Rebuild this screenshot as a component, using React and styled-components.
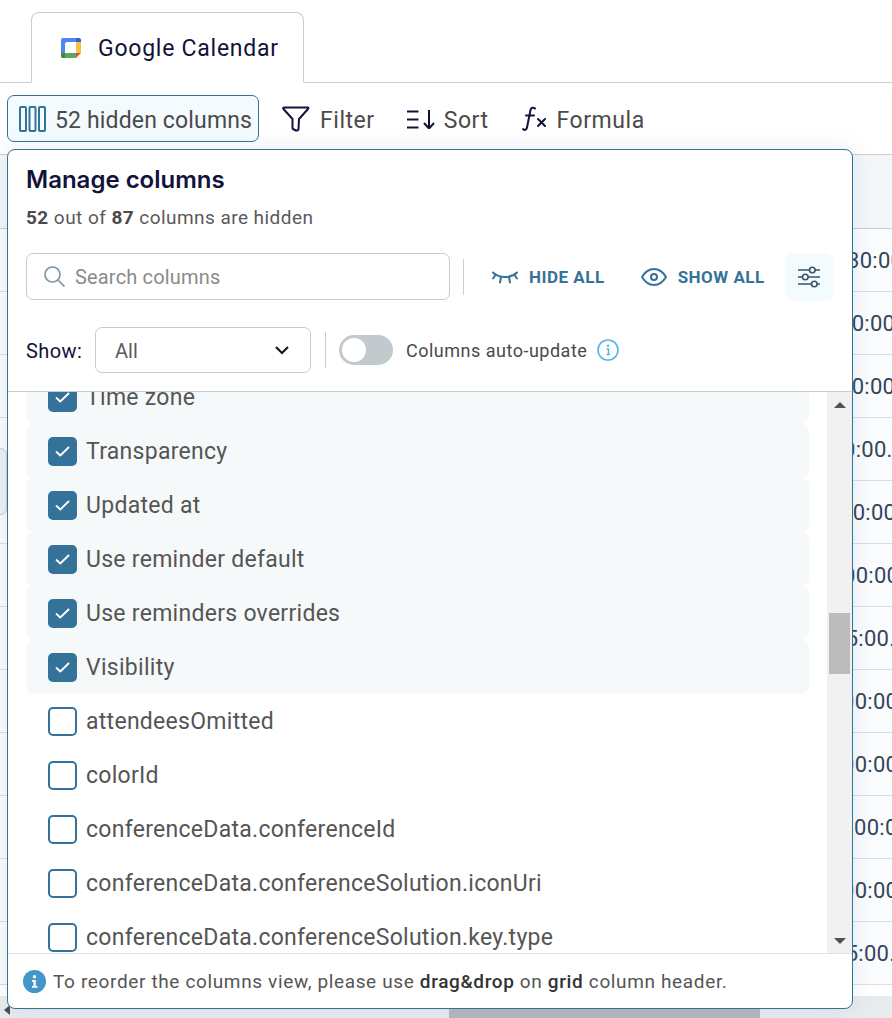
import styled, { createGlobalStyle } from 'styled-components'

const GlobalStyle = createGlobalStyle`
  html, body {
    margin: 0;
    padding: 0;
    background: #fff;
    font-family: Roboto, "Liberation Sans", sans-serif;
  }
  svg {
    flex-shrink: 0;
  }
`

const Page = styled.div`
  position: relative;
  width: 892px;
  height: 1018px;
  overflow: hidden;
  display: flex;
  flex-direction: column;
  background: #fff;
`

const TabBar = styled.div`
  height: 82px;
  flex-shrink: 0;
  box-sizing: content-box;
  border-bottom: 1px solid #c8cfd4;
  display: flex;
  align-items: flex-end;
  padding-left: 31px;
`

const Tab = styled.div`
  width: 273px;
  height: 71px;
  box-sizing: border-box;
  margin-bottom: -1px;
  background: #fff;
  border: 1px solid #c8cfd4;
  border-bottom: 1px solid #fff;
  border-radius: 8px 8px 0 0;
  display: flex;
  align-items: center;
  padding-left: 29px;
  gap: 17px;
  font-size: 23px;
  letter-spacing: 0.75px;
  color: #12123a;
`

const TabLabel = styled.span`
  padding-top: 2px;
`

const Toolbar = styled.div`
  height: 72px;
  flex-shrink: 0;
  box-sizing: border-box;
  display: flex;
  align-items: flex-start;
  padding: 12px 0 0 7px;
  border-bottom: 1px solid #c8cfd4;
`

const ColumnsButton = styled.div`
  width: 252px;
  height: 47px;
  box-sizing: border-box;
  background: #f4fbfe;
  border: 1px solid #35729a;
  border-radius: 7px;
  display: flex;
  align-items: center;
  padding: 1px 0 0 11px;
  gap: 9px;
  font-size: 23px;
  letter-spacing: 0.15px;
  color: #4a4a4a;
  white-space: nowrap;
`

const ToolButton = styled.div`
  height: 47px;
  padding-top: 1px;
  box-sizing: border-box;
  display: flex;
  align-items: center;
  gap: ${({ $gap }) => $gap}px;
  margin-left: ${({ $ml }) => $ml}px;
  font-size: 23px;
  letter-spacing: 0.55px;
  color: #4a4a4a;
`

const ToolLabel = styled.span`
  padding-top: 2px;
`

const Grid = styled.div`
  flex: 1;
  display: flex;
  flex-direction: column;
`

const GridHead = styled.div`
  height: 73px;
  flex-shrink: 0;
  border-bottom: 1px solid #c8cfd4;
  background: #f4f7f9;
`

const GridRow = styled.div`
  height: 61px;
  padding-top: 1px;
  flex-shrink: 0;
  border-bottom: 1px solid #d8dfe8;
  display: flex;
  align-items: center;
  padding-left: ${({ $x }) => $x}px;
  background: #fbfcfd;
  font-size: 22px;
  letter-spacing: 0.3px;
  color: #33455c;
  white-space: nowrap;
`

const GridFoot = styled.div`
  flex: 1;
  margin-top: 11px;
  background: #e9ecee;
  display: flex;
  justify-content: flex-start;
  padding-left: 449px;
`

const HScrollThumb = styled.div`
  width: 311px;
  background: #b4b8bb;
`

const LeftHandle = styled.div`
  position: absolute;
  left: -8px;
  top: 448px;
  width: 15px;
  height: 67px;
  box-sizing: border-box;
  background: #eef1f3;
  border: 1px solid #c8cfd4;
  border-radius: 6px;
`

const LeftArrow = styled.div`
  position: absolute;
  left: 4px;
  top: 1005px;
  width: 0;
  height: 0;
  border-top: 5px solid transparent;
  border-bottom: 5px solid transparent;
  border-right: 6px solid #4a4a4a;
`

const Panel = styled.div`
  position: absolute;
  left: 7px;
  top: 149px;
  width: 846px;
  height: 860px;
  box-sizing: border-box;
  background: #fff;
  border: 1px solid #35729a;
  border-radius: 8px;
  box-shadow: 0 0 24px rgba(90, 120, 150, 0.14);
  display: flex;
  flex-direction: column;
  overflow: hidden;
`

const PanelHead = styled.div`
  height: 242px;
  flex-shrink: 0;
  box-sizing: border-box;
  border-bottom: 1px solid #c8cfd4;
  padding: 15px 18px 0;
  display: flex;
  flex-direction: column;
`

const Title = styled.div`
  font-family: Inter, sans-serif;
  font-size: 24px;
  line-height: 30px;
  font-weight: 600;
  color: #12123a;
`

const Subtitle = styled.div`
  margin-top: 10px;
  font-size: 19px;
  line-height: 26px;
  letter-spacing: 0.45px;
  color: #5a5a5a;
  b {
    font-weight: 700;
    color: #4a4a4a;
  }
`

const SearchRow = styled.div`
  margin-top: 22px;
  height: 47px;
  display: flex;
  align-items: center;
`

const SearchBox = styled.div`
  width: 424px;
  height: 47px;
  flex-shrink: 0;
  box-sizing: border-box;
  border: 1px solid #c8cacc;
  border-radius: 7px;
  display: flex;
  align-items: center;
  padding-left: 17px;
  gap: 10px;
  font-size: 20px;
  letter-spacing: 0.17px;
  color: #8a8a8a;
`

const Divider = styled.div`
  width: 1px;
  height: 36px;
  flex-shrink: 0;
  background: #c8cfd4;
  margin: 0 ${({ $mr }) => $mr}px 0 ${({ $ml }) => $ml}px;
`

const ActionLink = styled.div`
  display: flex;
  align-items: center;
  gap: 11px;
  margin-right: ${({ $mr }) => $mr}px;
  font-size: 17px;
  font-weight: 700;
  letter-spacing: 0.5px;
  color: #35729a;
  white-space: nowrap;
`

const SettingsButton = styled.div`
  width: 48px;
  height: 48px;
  flex-shrink: 0;
  border-radius: 7px;
  background: #f4fbfd;
  display: flex;
  align-items: center;
  justify-content: center;
`

const ShowRow = styled.div`
  margin-top: 27px;
  height: 46px;
  display: flex;
  align-items: center;
`

const ShowLabel = styled.div`
  padding-top: 1px;
  font-size: 20px;
  letter-spacing: 0.4px;
  color: #12123a;
  width: 69px;
`

const Select = styled.div`
  width: 216px;
  height: 46px;
  box-sizing: border-box;
  border: 1px solid #c8cacc;
  border-radius: 7px;
  display: flex;
  align-items: center;
  justify-content: space-between;
  padding: 0 21px 0 19px;
  font-size: 20px;
  color: #5a5a5a;
`

const SelectValue = styled.span`
  padding-top: 2px;
`

const Toggle = styled.div`
  width: 54px;
  height: 30px;
  box-sizing: border-box;
  border-radius: 15px;
  background: #c3cacd;
  padding: 3px;
  margin-right: 13px;
`

const ToggleKnob = styled.div`
  width: 24px;
  height: 24px;
  border-radius: 50%;
  background: #fff;
`

const ToggleText = styled.div`
  padding-top: 1px;
  font-size: 18px;
  letter-spacing: 0.5px;
  color: #4a4a4a;
  margin-right: 10px;
`

const ListArea = styled.div`
  flex: 1;
  min-height: 0;
  display: flex;
`

const List = styled.div`
  flex: 1;
  overflow: hidden;
  padding: 0 18px;
`

const ListInner = styled.div`
  margin-top: -22px;
`

const Row = styled.div`
  height: 54px;
  box-sizing: border-box;
  display: flex;
  align-items: center;
  padding-left: 22px;
  gap: 9px;
  border-radius: 8px;
  background: ${({ $checked }) => ($checked ? '#f6f9fa' : 'transparent')};
  font-size: 23px;
  letter-spacing: 0.28px;
  color: #555;
  white-space: nowrap;
`

const Box = styled.div`
  width: 29px;
  height: 29px;
  flex-shrink: 0;
  box-sizing: border-box;
  border-radius: 5px;
  border: 2px solid #35729a;
  background: ${({ $checked }) => ($checked ? '#35729a' : '#fff')};
  display: flex;
  align-items: center;
  justify-content: center;
`

const ScrollTrack = styled.div`
  width: 25px;
  flex-shrink: 0;
  background: #f1f1f1;
  display: flex;
  flex-direction: column;
  align-items: center;
`

const ArrowUp = styled.div`
  margin-top: 10px;
  border-left: 6px solid transparent;
  border-right: 6px solid transparent;
  border-bottom: 6px solid #505050;
`

const ArrowDown = styled.div`
  margin-top: auto;
  margin-bottom: 9px;
  border-left: 6px solid transparent;
  border-right: 6px solid transparent;
  border-top: 6px solid #505050;
`

const ScrollThumb = styled.div`
  margin-top: 205px;
  width: 21px;
  height: 61px;
  background: #bcbcbc;
`

const Footer = styled.div`
  height: 55px;
  flex-shrink: 0;
  box-sizing: border-box;
  border-top: 1px solid #d8e2ea;
  display: flex;
  align-items: center;
  padding: 0 0 0 15px;
  gap: 7px;
  font-size: 19px;
  letter-spacing: 0.64px;
  color: #555;
  b {
    font-weight: 500;
    color: #333;
  }
`

const rows = [
  ['Time zone', true],
  ['Transparency', true],
  ['Updated at', true],
  ['Use reminder default', true],
  ['Use reminders overrides', true],
  ['Visibility', true],
  ['attendeesOmitted', false],
  ['colorId', false],
  ['conferenceData.conferenceId', false],
  ['conferenceData.conferenceSolution.iconUri', false],
  ['conferenceData.conferenceSolution.key.type', false],
]

// x is where the cell text starts, the panel covers everything left of 853
const gridRows = [
  { x: 847, text: '30:00' },
  { x: 839, text: '00:00' },
  { x: 839, text: '00:00' },
  { x: 843, text: '0:00.000' },
  { x: 840, text: '00:00' },
  { x: 843, text: '00:00' },
  { x: 833, text: '15:00.0' },
  { x: 842, text: '00:00' },
  { x: 842, text: '00:00' },
  { x: 854, text: '00:00' },
  { x: 842, text: '00:00' },
  { x: 833, text: '15:00.0' },
]

function CalendarLogo() {
  return (
    <svg width="20" height="20" viewBox="0 0 20 20">
      <path d="M2 0h14v4H6a2 2 0 0 0-2 2v9H0V2a2 2 0 0 1 2-2z" fill="#4f86ec" />
      <path d="M15 0h3a2 2 0 0 1 2 2v2h-5z" fill="#2f62c6" />
      <path d="M15 4h5v11h-5z" fill="#f6c244" />
      <path d="M4 15h11v5H2a2 2 0 0 1-2-2v-3z" fill="#5aa860" />
      <path d="M0 15h4v5H2a2 2 0 0 1-2-2z" fill="#3c8a44" />
      <path d="M15 15h5l-5 5z" fill="#e0503f" />
    </svg>
  )
}

function ColumnsIcon() {
  return (
    <svg width="27" height="26" viewBox="0 0 27 26" fill="none" stroke="#35729a" strokeWidth="2">
      <rect x="1" y="1" width="6" height="24" rx="1" />
      <rect x="10.5" y="1" width="6" height="24" rx="1" />
      <rect x="20" y="1" width="6" height="24" rx="1" />
    </svg>
  )
}

function FunnelIcon() {
  return (
    <svg width="28" height="27" viewBox="0 0 28 27" fill="none" stroke="#12123a" strokeWidth="2" strokeLinejoin="round">
      <path d="M2.500 1.500h23q1.500 0 .5 1.500L17 13l-.5 10q-.5 2-2.500 1.500L11 23q-.5 0-.5-1V13L1.500 3q-1-1.500 1-1.500z" />
    </svg>
  )
}

function SortIcon() {
  return (
    <svg width="28" height="19" viewBox="0 0 28 19" fill="none" stroke="#12123a" strokeWidth="2">
      <path d="M0 1.500h11.500M0 9.500h11.500M0 17.500h11.500" />
      <path d="M22 0v18M17 13l5 5.500 5-5.500" />
    </svg>
  )
}

function FormulaIcon() {
  return (
    <svg width="26" height="26" viewBox="0 0 26 26" fill="none" stroke="#12123a" strokeWidth="2" strokeLinecap="round">
      <path d="M14 2.500c-1.500-1.500-4-1-4.500 1.500L6 21.500c-.5 2.500-3 3-4 1.500" />
      <path d="M5 9.500h8" />
      <path d="M17 13l7 7M24 13l-7 7" />
    </svg>
  )
}

function SearchIcon() {
  return (
    <svg width="21" height="21" viewBox="0 0 21 21" fill="none" stroke="#7e97a6" strokeWidth="1.700">
      <circle cx="8.500" cy="8.500" r="7.500" />
      <path d="M14 14l6.500 6.500" />
    </svg>
  )
}

function ClosedEyeIcon() {
  return (
    <svg width="26" height="14" viewBox="0 0 26 14" fill="none" stroke="#35729a" strokeWidth="2" strokeLinecap="round">
      <path d="M1 2.500c3 3 7 4.500 12 4.500s9-1.500 12-4.500" />
      <path d="M3.500 5L1 8.500M9 7l-1 5.500M17 7l1 5.500M22.500 5L25 8.500" />
    </svg>
  )
}

function EyeIcon() {
  return (
    <svg width="26" height="18" viewBox="0 0 26 18" fill="none" stroke="#35729a" strokeWidth="2">
      <path d="M1 9c3-5 7.500-8 12-8s9 3 12 8c-3 5-7.500 8-12 8S4 14 1 9z" />
      <circle cx="13" cy="9" r="3" />
    </svg>
  )
}

function SlidersIcon() {
  return (
    <svg width="22" height="22" viewBox="0 0 22 22" fill="none" stroke="#35566e" strokeWidth="1.600">
      <path d="M0 4h11.500M17 4h5M0 11h4.500M10 11h12M0 18h13.500M19 18h3" />
      <circle cx="14.300" cy="4" r="2.800" />
      <circle cx="7.300" cy="11" r="2.800" />
      <circle cx="16.300" cy="18" r="2.800" />
    </svg>
  )
}

function ChevronIcon() {
  return (
    <svg width="14" height="9" viewBox="0 0 14 9" fill="none" stroke="#111" strokeWidth="2">
      <path d="M1 1l6 6 6-6" />
    </svg>
  )
}

function InfoOutlineIcon() {
  return (
    <svg width="22" height="22" viewBox="0 0 22 22" fill="none">
      <circle cx="11" cy="11" r="10" stroke="#5bb4ea" strokeWidth="1.600" />
      <circle cx="11" cy="6.800" r="1.200" fill="#5bb4ea" />
      <path d="M9.500 10h2v5.500M9.500 15.500h3.500" stroke="#5bb4ea" strokeWidth="1.500" />
    </svg>
  )
}

function InfoFilledIcon() {
  return (
    <svg width="23" height="23" viewBox="0 0 23 23">
      <circle cx="11.500" cy="11.500" r="11.500" fill="#4496c9" />
      <circle cx="11.500" cy="6.800" r="1.700" fill="#fff" />
      <path d="M9 10h3.800v6H14.500v1.800h-5.500V16h1.500v-4.200H9z" fill="#fff" />
    </svg>
  )
}

function CheckIcon() {
  return (
    <svg width="15" height="11" viewBox="0 0 15 11" fill="none" stroke="#fff" strokeWidth="1.800" strokeLinecap="round" strokeLinejoin="round">
      <path d="M1.500 6l3.800 3.500L13.500 1.500" />
    </svg>
  )
}

function App() {
  return (
    <>
      <GlobalStyle />
      <Page>
        <TabBar>
          <Tab>
            <CalendarLogo />
            <TabLabel>Google Calendar</TabLabel>
          </Tab>
        </TabBar>
        <Toolbar>
          <ColumnsButton>
            <ColumnsIcon />
            <ToolLabel>52 hidden columns</ToolLabel>
          </ColumnsButton>
          <ToolButton $ml={23} $gap={10}>
            <FunnelIcon />
            <ToolLabel>Filter</ToolLabel>
          </ToolButton>
          <ToolButton $ml={32} $gap={9}>
            <SortIcon />
            <ToolLabel>Sort</ToolLabel>
          </ToolButton>
          <ToolButton $ml={32} $gap={10}>
            <FormulaIcon />
            <ToolLabel>Formula</ToolLabel>
          </ToolButton>
        </Toolbar>
        <Grid>
          <GridHead />
          {gridRows.map((row, i) => (
            <GridRow key={i} $x={row.x}>
              {row.text}
            </GridRow>
          ))}
          <GridFoot>
            <HScrollThumb />
          </GridFoot>
        </Grid>
        <LeftHandle />
        <LeftArrow />
        <Panel>
          <PanelHead>
            <Title>Manage columns</Title>
            <Subtitle>
              <b>52</b> out of <b>87</b> columns are hidden
            </Subtitle>
            <SearchRow>
              <SearchBox>
                <SearchIcon />
                Search columns
              </SearchBox>
              <Divider $ml={13} $mr={28} />
              <ActionLink $mr={36}>
                <ClosedEyeIcon />
                HIDE ALL
              </ActionLink>
              <ActionLink $mr={20}>
                <EyeIcon />
                SHOW ALL
              </ActionLink>
              <SettingsButton>
                <SlidersIcon />
              </SettingsButton>
            </SearchRow>
            <ShowRow>
              <ShowLabel>Show:</ShowLabel>
              <Select>
                <SelectValue>All</SelectValue>
                <ChevronIcon />
              </Select>
              <Divider $ml={14} $mr={13} />
              <Toggle>
                <ToggleKnob />
              </Toggle>
              <ToggleText>Columns auto-update</ToggleText>
              <InfoOutlineIcon />
            </ShowRow>
          </PanelHead>
          <ListArea>
            <List>
              <ListInner>
                {rows.map(([label, checked]) => (
                  <Row key={label} $checked={checked}>
                    <Box $checked={checked}>{checked && <CheckIcon />}</Box>
                    {label}
                  </Row>
                ))}
              </ListInner>
            </List>
            <ScrollTrack>
              <ArrowUp />
              <ScrollThumb />
              <ArrowDown />
            </ScrollTrack>
          </ListArea>
          <Footer>
            <InfoFilledIcon />
            <span>
              To reorder the columns view, please use <b>drag&amp;drop</b> on <b>grid</b> column header.
            </span>
          </Footer>
        </Panel>
      </Page>
    </>
  )
}

export default App
